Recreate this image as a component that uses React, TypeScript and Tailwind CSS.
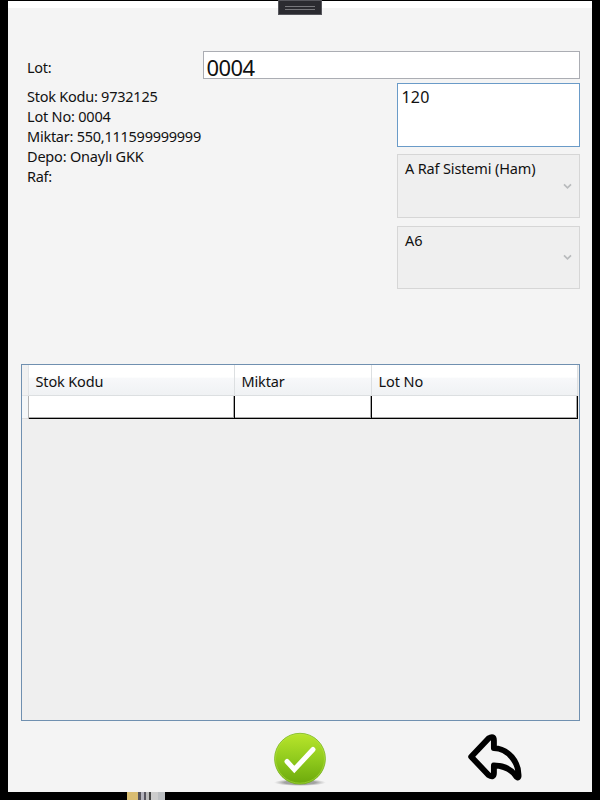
import React from "react";

function Chevron() {
  return (
    <svg className="mr-[7px] h-[7px] w-[9px]" viewBox="0 0 9 7" fill="none" stroke="#b9bbbd" strokeWidth="1.7">
      <path d="M1 1.3 4.5 4.8 8 1.3" />
    </svg>
  );
}

function Combo({ label, className }: { label: string; className: string }) {
  return (
    <div className={`flex justify-between border border-[#d6d6d6] bg-[#efefef] pl-[7px] ${className}`}>
      <span className="pt-[3px] text-[14.5px] leading-5">{label}</span>
      <div className="flex items-center">
        <Chevron />
      </div>
    </div>
  );
}

function HeaderCell({ label, className }: { label: string; className: string }) {
  return (
    <div className={`border-r border-b border-[#dcdfe1] bg-linear-to-b from-white from-40% via-[#f7f8fa] via-45% to-[#f0f2f4] pl-[6.5px] text-[14.5px] leading-[33px] ${className}`}>
      {label}
    </div>
  );
}

function ConfirmIcon() {
  return (
    <svg className="h-[56px] w-[56px]" viewBox="0 0 56 56">
      <defs>
        <linearGradient id="green" x1="0" y1="0" x2="0" y2="1">
          <stop offset="0" stopColor="#b9e52b" />
          <stop offset="0.5" stopColor="#91cb1d" />
          <stop offset="1" stopColor="#6ca90c" />
        </linearGradient>
        <radialGradient id="shade">
          <stop offset="0.6" stopColor="#777" stopOpacity="0.65" />
          <stop offset="1" stopColor="#999" stopOpacity="0" />
        </radialGradient>
      </defs>
      <ellipse cx="28" cy="50.5" rx="26" ry="3.5" fill="url(#shade)" />
      <circle cx="28" cy="26.7" r="25.4" fill="url(#green)" stroke="#79b51c" strokeWidth="0.8" />
      <circle cx="28" cy="26.7" r="24.5" fill="none" stroke="#b9e54d" strokeOpacity="0.6" strokeWidth="0.8" />
      <path d="M15 30.5 22.3 38.5 41 18.5" transform="translate(0 -1)" fill="none" stroke="#fff" strokeWidth="5" strokeLinecap="round" strokeLinejoin="miter" />
    </svg>
  );
}

function BackIcon() {
  return (
    <svg className="h-[48px] w-[56px]" viewBox="0 0 56 48" fill="none" stroke="#000" strokeWidth="5.9" strokeLinejoin="round">
      <path d="M4.2 23.7 21.5 5.5Q26.9 1.9 26.9 7.5V15.1C41 15.5 52.2 29 51.5 43.5Q50.8 46 48.6 42.6C43.5 35.5 37 32.6 26.9 32.5V40Q26.9 45.3 21.5 42Z" />
    </svg>
  );
}

export default function App() {
  return (
    <div className="flex h-[800px] w-[600px] flex-col overflow-hidden bg-black px-2 pt-px font-['Noto_Sans','Open_Sans',sans-serif] text-[14.5px] text-[#111]">
      <div className="relative flex h-[791px] flex-col bg-[#f4f4f4]">
        <div className="h-[7px] shrink-0 bg-white" />
        <div className="absolute top-[-1px] left-[270px] flex h-[15px] w-[44px] items-center justify-center border border-[#56565c] bg-[#2b2b30]">
          <div className="h-[4px] w-[30px] border-y border-[#77777b]" />
        </div>

        <div className="mt-[43px] flex h-[28px] shrink-0 pr-3 pl-[19px]">
          <span className="w-[176px] pt-[6px] leading-5 tracking-[-0.3px]">Lot:</span>
          <div className="flex-1 border border-[#abadb3] bg-white pl-[2.5px] text-[22px] leading-[31px] tracking-[-0.55px]">0004</div>
        </div>

        <div className="mt-1 flex h-[206px] shrink-0 justify-between pr-3 pl-[19px]">
          <div className="pt-[3px] leading-5">
            <div className="tracking-[-0.24px]">Stok Kodu: 9732125</div>
            <div className="tracking-[-0.2px]">Lot No: 0004</div>
            <div className="tracking-[-0.25px]">Miktar: 550,111599999999</div>
            <div className="tracking-[-0.2px]">Depo: Onaylı GKK</div>
            <div className="tracking-[-0.3px]">Raf:</div>
          </div>
          <div className="flex w-[183px] flex-col">
            <div className="h-[64px] border border-[#6a9bc8] bg-white pl-[3.5px] text-[16px] leading-[27px] tracking-[0.2px]">120</div>
            <Combo label="A Raf Sistemi (Ham)" className="mt-[7px] h-[64px] tracking-[-0.15px]" />
            <Combo label="A6" className="mt-2 h-[63px] tracking-[-0.1px]" />
          </div>
        </div>

        <div className="mt-[75px] mr-3 ml-[13px] h-[357px] shrink-0 border border-[#7090b0] bg-[#efefef]">
          <div className="flex h-[31px]">
            <div className="w-[7px] border-r border-b border-[#e2e4e6] bg-[#f1f1f1]" />
            <HeaderCell label="Stok Kodu" className="w-[206px] tracking-[-0.15px]" />
            <HeaderCell label="Miktar" className="w-[137px] tracking-[-0.15px]" />
            <HeaderCell label="Lot No" className="w-[206px] tracking-[-0.1px]" />
          </div>
          <div className="flex h-[23px]">
            <div className="w-[6px] border-b border-[#dddddd] bg-[#f5f7f8]" />
            <div className="w-px bg-[#b4b4b4]" />
            <div className="w-[206px] border-r border-b border-black bg-white shadow-[inset_-1px_-1px_0_#aaa]" />
            <div className="w-[137px] border-r border-b border-black bg-white shadow-[inset_-1px_-1px_0_#aaa]" />
            <div className="w-[206px] border-r border-b border-black bg-white shadow-[inset_-1px_-1px_0_#aaa]" />
          </div>
        </div>

        <div className="flex pt-[11px]">
          <div className="ml-[264px]"><ConfirmIcon /></div>
          <div className="mt-px ml-[139px]"><BackIcon /></div>
        </div>
      </div>
      <div className="ml-[119px] flex h-2 shrink-0">
        <div className="w-[11px] bg-[#d9bd72]" />
        <div className="w-[3px] bg-[#55535b]" />
        <div className="w-[3px] bg-[#b4b3bd]" />
        <div className="w-[2px] bg-[#56545e]" />
        <div className="w-[3px] bg-[#bbb]" />
        <div className="w-[2px] bg-[#444]" />
        <div className="w-[7px] bg-[#ccc]" />
        <div className="w-[7px] bg-[#bcbfc2]" />
      </div>
    </div>
  );
}
